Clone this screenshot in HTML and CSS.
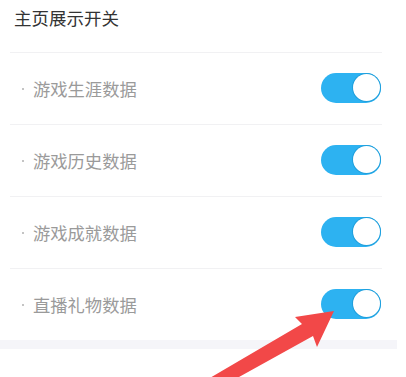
FILE: index.html
```html
<!DOCTYPE html>
<html lang="zh">
<head>
<meta charset="utf-8">
<link rel="stylesheet" href="styles.css">
</head>
<body>
<div class="page">
  <div class="title">主页展示开关</div>
  <div class="list">
    <div class="row"><span class="dot"></span><span class="label">游戏生涯数据</span><span class="switch"><span class="knob"></span></span></div>
    <div class="row"><span class="dot"></span><span class="label">游戏历史数据</span><span class="switch"><span class="knob"></span></span></div>
    <div class="row"><span class="dot"></span><span class="label">游戏成就数据</span><span class="switch"><span class="knob"></span></span></div>
    <div class="row last"><span class="dot"></span><span class="label">直播礼物数据</span><span class="switch"><span class="knob"></span></span></div>
  </div>
  <div class="band"></div>
  <svg class="arrow" width="406" height="377" viewBox="0 0 406 377">
    <polygon points="334,311 295,317 302,324 203,382 230,382 313,336 317,347" fill="#f24848"/>
  </svg>
</div>
</body>
</html>
```
FILE: styles.css
```css
html, body {
  margin: 0;
  padding: 0;
  background: #ffffff;
}
body {
  font-family: "Noto Sans CJK SC", "Noto Sans", sans-serif;
  width: 406px;
  height: 377px;
  overflow: hidden;
}
.page {
  position: relative;
  width: 406px;
  height: 377px;
}
.title {
  height: 52px;
  box-sizing: border-box;
  padding: 6px 0 0 14px;
  font-size: 17.5px;
  line-height: 24px;
  color: #333333;
}
.list {
  display: flex;
  flex-direction: column;
  border-top: 1px solid #f1f1f3;
  margin: 0 24px 0 10px;
}
.row {
  height: 71px;
  display: flex;
  align-items: center;
  border-bottom: 1px solid #f1f1f3;
  padding-left: 12px;
}
.row.last {
  border-bottom: none;
}
.dot {
  width: 2px;
  height: 2px;
  border-radius: 50%;
  background: #b0b0b0;
  margin-right: 9px;
  margin-top: 1px;
}
.label {
  font-size: 17.3px;
  line-height: 24px;
  color: #9a9a9a;
  flex: 1;
}
.switch {
  width: 60px;
  height: 30px;
  border-radius: 15px;
  background: #2db2f1;
  display: flex;
  align-items: center;
  justify-content: flex-end;
  padding-right: 1.5px;
  box-sizing: border-box;
  margin-right: 1px;
  margin-top: -2px;
}
.knob {
  width: 27px;
  height: 27px;
  border-radius: 50%;
  background: #ffffff;
  box-shadow: 0 0 0 1px #1f9fdc;
}
.band {
  height: 9px;
  width: 397px;
  background: #f5f5f9;
}
.arrow {
  position: absolute;
  left: 0;
  top: 0;
  pointer-events: none;
}
```
